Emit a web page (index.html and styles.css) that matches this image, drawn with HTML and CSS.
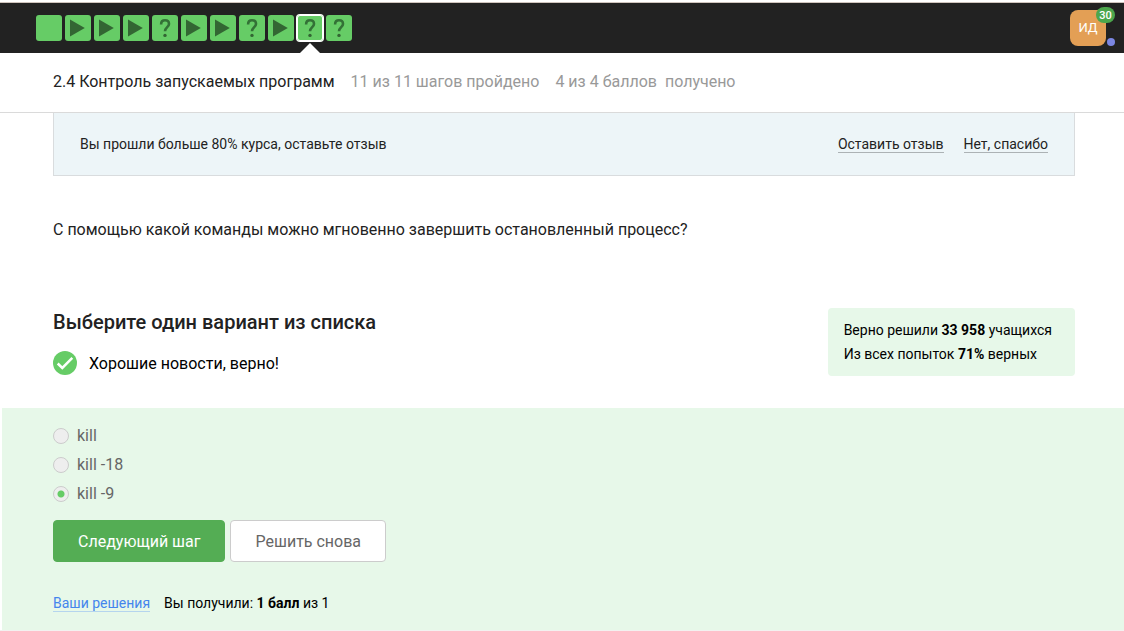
FILE: index.html
```html
<!DOCTYPE html>
<html lang="ru">
<head>
<meta charset="utf-8">
<meta name="viewport" content="width=device-width, initial-scale=1">
<title>2.4 Контроль запускаемых программ</title>
<link rel="stylesheet" href="styles.css">
</head>
<body>
<svg class="sprite" aria-hidden="true">
  <symbol id="play" viewBox="0 0 26 26"><path d="M5 4.500 19.800 13 5 21.500z"/></symbol>
  <symbol id="quiz" viewBox="0 0 26 26"><path class="hook" d="M9.100 9.400C9.100 6.800 10.600 5.300 13 5.300S17 6.700 17 9C17 12 13 12.500 13 16.300"/><circle cx="13" cy="20.400" r="1.700"/></symbol>
</svg>
<header class="topbar">
  <nav class="steps" aria-label="Шаги урока">
    <a class="step" href="#s1" aria-label="Шаг 1"></a>
    <a class="step" href="#s2" aria-label="Шаг 2"><svg><use href="#play"/></svg></a>
    <a class="step" href="#s3" aria-label="Шаг 3"><svg><use href="#play"/></svg></a>
    <a class="step" href="#s4" aria-label="Шаг 4"><svg><use href="#play"/></svg></a>
    <a class="step" href="#s5" aria-label="Шаг 5"><svg><use href="#quiz"/></svg></a>
    <a class="step" href="#s6" aria-label="Шаг 6"><svg><use href="#play"/></svg></a>
    <a class="step" href="#s7" aria-label="Шаг 7"><svg><use href="#play"/></svg></a>
    <a class="step" href="#s8" aria-label="Шаг 8"><svg><use href="#quiz"/></svg></a>
    <a class="step" href="#s9" aria-label="Шаг 9"><svg><use href="#play"/></svg></a>
    <a class="step step-active" href="#s10" aria-label="Шаг 10" aria-current="step"><svg><use href="#quiz"/></svg></a>
    <a class="step" href="#s11" aria-label="Шаг 11"><svg><use href="#quiz"/></svg></a>
  </nav>
  <button class="avatar" type="button">ИД<span class="badge">30</span><span class="status"></span></button>
</header>
<div class="lesson">
  <h1 class="lesson-title">2.4 Контроль запускаемых программ</h1>
  <span>11 из 11 шагов пройдено</span>
  <span>4 из 4 баллов&nbsp; получено</span>
</div>
<main>
  <div class="wrap">
    <section class="review">
      <p>Вы прошли больше 80% курса, оставьте отзыв</p>
      <div class="review-links"><a href="#review">Оставить отзыв</a><a href="#dismiss">Нет, спасибо</a></div>
    </section>
    <p class="question">С помощью какой команды можно мгновенно завершить остановленный процесс?</p>
    <section class="task">
      <div>
        <h2 class="task-title">Выберите один вариант из списка</h2>
        <p class="verdict"><svg class="check" viewBox="0 0 24 24" aria-hidden="true"><circle cx="12" cy="12" r="12"/><path d="M4.700 12.500 9.300 17 19.300 6.900"/></svg><span>Хорошие новости, верно!</span></p>
      </div>
      <div class="stats"><p>Верно решили <b>33 958</b> учащихся</p><p>Из всех попыток <b>71%</b> верных</p></div>
    </section>
  </div>
  <form class="answer">
    <div class="options">
      <label class="option"><input type="radio" name="answer"><span>kill</span></label>
      <label class="option"><input type="radio" name="answer"><span>kill -18</span></label>
      <label class="option"><input type="radio" name="answer" checked><span>kill -9</span></label>
    </div>
    <div class="actions">
      <button class="btn btn-next" type="button">Следующий шаг</button>
      <button class="btn btn-retry" type="button">Решить снова</button>
    </div>
    <div class="result"><a href="#solutions">Ваши решения</a><p>Вы получили: <b>1 балл</b> из 1</p></div>
  </form>
</main>
</body>
</html>
```
FILE: styles.css
```css
* { box-sizing: border-box; }
body {
  margin: 0;
  background: #fff;
  color: #222;
  font: 16px/24px Roboto, sans-serif;
}
h1, h2, p { margin: 0; }
.sprite { display: none; }

.topbar {
  display: flex;
  align-items: center;
  justify-content: space-between;
  height: 51px;
  margin-top: 2px;
  padding: 0 18px 0 36px;
  border-top: 1px solid #d0c5be;
  background: #222;
}
html { background: #f3f1f0; }
.lesson, main { background: #fff; }
.steps { display: flex; gap: 3px; }
.step {
  position: relative;
  width: 26px;
  height: 26px;
  border-radius: 3px;
  background: #6c6;
}
.step svg {
  display: block;
  width: 26px;
  height: 26px;
  fill: #363;
}
.hook { fill: none; stroke: #337136; stroke-width: 2.600; }
.step-active { box-shadow: 0 0 0 1px #fff, inset 0 0 0 1px #fff; }
.step-active::after {
  content: "";
  position: absolute;
  top: 28px;
  left: 3px;
  border: 10px solid transparent;
  border-top: 0;
  border-bottom-color: #fff;
}
.avatar {
  position: relative;
  width: 36px;
  height: 36px;
  padding: 0;
  border: 0;
  border-radius: 8px;
  background: #e39f55;
  color: #fff;
  font: 13px/36px Roboto, sans-serif;
}
.badge {
  position: absolute;
  top: -3px;
  right: -9px;
  width: 19px;
  height: 16px;
  border-radius: 8px;
  background: #4ca64c;
  font: 500 11px/17px Roboto, sans-serif;
}
.status {
  position: absolute;
  right: -9px;
  bottom: 0;
  width: 8px;
  height: 8px;
  border-radius: 50%;
  background: #7b86e2;
}

.lesson {
  display: flex;
  flex-wrap: wrap;
  align-items: center;
  gap: 16px;
  padding: 17px 53px 18px;
  border-bottom: 1px solid #dadada;
  color: #999;
}
.lesson-title { color: #222; font-size: 16px; font-weight: 400; }

.wrap { padding: 0 49px 32px 53px; }
.review {
  display: flex;
  align-items: center;
  justify-content: space-between;
  padding: 19px 26px;
  border: 1px solid #d9dcde;
  border-top: 0;
  background: #edf5f8;
  font-size: 14px;
}
.review-links { display: flex; gap: 20px; line-height: 16px; }
.review-links a {
  border-bottom: 1px solid #acb2b5;
  color: #222;
  text-decoration: none;
}
.question { padding: 42px 0 66px; }
.task {
  display: flex;
  align-items: flex-start;
  justify-content: space-between;
}
.task-title { font-size: 20px; font-weight: 500; line-height: 28px; }
.verdict {
  display: flex;
  align-items: center;
  gap: 12px;
  padding-top: 15px;
  color: #000;
  line-height: 22px;
}
.verdict span { padding-top: 2px; }
.check { width: 24px; height: 24px; }
.check circle { fill: #6c6; }
.check path { fill: none; stroke: #fff; stroke-width: 2.500; }
.stats {
  padding: 10px 23px 10px 16px;
  border-radius: 4px;
  background: #e7f8e9;
  color: #000;
  font-size: 14px;
}

.answer {
  margin-left: 2px;
  padding: 13px 51px 15px;
  background: #e7f8e9;
}
.options { display: grid; justify-items: start; }
.option {
  display: flex;
  align-items: center;
  gap: 8px;
  height: 29px;
  color: #666;
}
.option input {
  appearance: none;
  width: 16px;
  height: 16px;
  margin: 0;
  border: 1px solid #ccc;
  border-radius: 50%;
  background: #eee;
}
.option input:checked { background: radial-gradient(circle, #6c6 3px, #eee 4px); }
.actions { display: flex; flex-wrap: wrap; gap: 5px; padding-top: 12px; }
.btn {
  height: 42px;
  padding: 2px 24px 0;
  border: 1px solid #54ad54;
  border-radius: 4px;
  font: 16px/24px Roboto, sans-serif;
}
.btn-next { background: #54ad54; color: #fff; }
.btn-retry { border-color: #ccc; background: #fff; color: #666; }
.result {
  display: flex;
  align-items: center;
  gap: 14px;
  padding-top: 29px;
  color: #000;
  font-size: 14px;
}
.result a {
  border-bottom: 1px solid #b5d5ee;
  color: #4485ed;
  line-height: 16px;
  text-decoration: none;
}
```
